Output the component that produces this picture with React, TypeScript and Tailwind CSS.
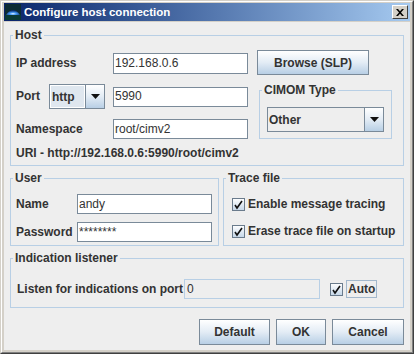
import type { ReactNode } from "react";

const label = "text-[12px] font-bold text-[#333333] leading-[15px] whitespace-nowrap";
const btn =
  "flex items-center justify-center border border-[#7a8a99] bg-linear-to-b from-white via-[#e3ecf5] to-[#b8cfe5] text-[12px] font-bold text-[#333333]";

function Group({ title, className, children }: { title: string; className?: string; children: ReactNode }) {
  return (
    <fieldset className={`border border-[#b8cfe5] min-w-0 ${className ?? ""}`}>
      <legend className="ml-[2px] px-[2px] h-[15px] leading-[15px] text-[12px] font-bold text-[#333333]">
        {title}
      </legend>
      {children}
    </fieldset>
  );
}

function Field({ value, className }: { value: string; className?: string }) {
  return (
    <div
      className={`flex items-center border border-[#7a8a99] bg-white pl-[1px] text-[12px] text-[#333333] leading-[15px] ${className ?? ""}`}
    >
      {value}
    </div>
  );
}

function Arrow() {
  return (
    <svg width="9" height="5" viewBox="0 0 9 5">
      <path d="M0 0h9L4.5 5z" fill="#111" />
    </svg>
  );
}

function Combo({ value, className, flat }: { value: string; className?: string; flat?: boolean }) {
  return (
    <div className={`flex border border-[#7a8a99] ${className ?? ""}`}>
      <div
        className={`flex-1 flex items-center pl-[1px] text-[12px] font-bold text-[#333333] ${
          flat ? "bg-[#eeeeee]" : "bg-[#dfe7ef] border border-white"
        }`}
      >
        {value}
      </div>
      <div className="w-[19px] flex items-center justify-center border-l border-[#7a8a99] bg-linear-to-b from-white via-[#e3ecf5] to-[#b8cfe5]">
        <Arrow />
      </div>
    </div>
  );
}

function Check() {
  return (
    <svg width="13" height="13" viewBox="0 0 13 13" className="shrink-0">
      <defs>
        <linearGradient id="cb" x1="0" y1="0" x2="0" y2="1">
          <stop offset="0" stopColor="#ffffff" />
          <stop offset="1" stopColor="#c4d6e8" />
        </linearGradient>
      </defs>
      <rect x="0.5" y="0.5" width="12" height="12" fill="url(#cb)" stroke="#6a7b8c" />
      <path d="M3 7l2 3L10 3" fill="none" stroke="#111" strokeWidth="1.6" />
    </svg>
  );
}

function AppIcon() {
  return (
    <svg width="16" height="16" viewBox="0 0 16 16">
      <defs>
        <radialGradient id="dome" cx="0.5" cy="0.75" r="0.6">
          <stop offset="0" stopColor="#e8f4ff" />
          <stop offset="0.35" stopColor="#4aa0ff" />
          <stop offset="1" stopColor="#0a3070" />
        </radialGradient>
      </defs>
      <rect width="16" height="16" fill="#0d2b33" />
      <path d="M1 11 Q8 1 15 11 Z" fill="url(#dome)" />
      <rect y="11" width="16" height="5" fill="#0a3a36" />
    </svg>
  );
}

export default function App() {
  return (
    <div className="w-[414px] h-[354px] font-['Liberation_Sans',Arial,sans-serif] border border-t-[#d4d0c8] border-l-[#d4d0c8] border-r-[#404040] border-b-[#404040]">
      <div className="h-full flex flex-col border border-t-white border-l-white border-r-[#808080] border-b-[#808080] bg-[#d4d0c8] px-[2px] pb-[2px] pt-[1px]">
        {/* title bar */}
        <div className="h-[18px] flex items-center bg-linear-to-r from-[#0a246a] to-[#a6caf0]">
          <div className="ml-[1px]">
            <AppIcon />
          </div>
          <span className="ml-[3px] text-[11.5px] font-bold text-white leading-[14px]">Configure host connection</span>
          <div className="ml-auto mr-[2px] w-[16px] h-[14px] border border-t-white border-l-white border-r-[#404040] border-b-[#404040] bg-[#d4d0c8] flex items-center justify-center">
            <svg width="8" height="7" viewBox="0 0 8 7">
              <path d="M0 0h2l2 2.3L6 0h2L5 3.5 8 7H6L4 4.7 2 7H0l3-3.5z" fill="#000" />
            </svg>
          </div>
        </div>

        {/* dialog content */}
        <div className="flex-1 mt-[1px] bg-[#eeeeee] flex flex-col">
          <Group title="Host" className="mx-[6px] mt-[6px] h-[138px]">
            <div className="flex pl-[5px] pt-[8px]">
              <div className="w-[232px] flex flex-col">
                <div className="flex items-center h-[25px]">
                  <span className={`${label} w-[97px]`}>IP address</span>
                  <Field value="192.168.0.6" className="w-[135px] h-[21px]" />
                </div>
                <div className="flex items-center h-[25px] mt-[8px]">
                  <span className={`${label} w-[33px]`}>Port</span>
                  <Combo value="http" className="w-[56px] h-[25px]" />
                  <Field value="5990" className="ml-[8px] w-[135px] h-[20px]" />
                </div>
                <div className="flex items-center h-[20px] mt-[10px]">
                  <span className={`${label} w-[97px]`}>Namespace</span>
                  <Field value="root/cimv2" className="w-[135px] h-[20px]" />
                </div>
                <div className={`${label} mt-[7px]`}>URI - http://192.168.0.6:5990/root/cimv2</div>
              </div>
              <div className="ml-[9px] flex flex-col -mt-[1px]">
                <div className={`${btn} w-[112px] h-[25px]`}>Browse (SLP)</div>
                <Group title="CIMOM Type" className="ml-[2px] mt-[8px] w-[133px] h-[56px]">
                  <div className="pl-[7px] pt-[9px]">
                    <Combo value="Other" flat className="w-[117px] h-[25px]" />
                  </div>
                </Group>
              </div>
            </div>
          </Group>

          <div className="flex mx-[6px] mt-[5px] gap-[4px]">
            <Group title="User" className="w-[209px] h-[75px]">
              <div className="pl-[5px] pt-[8px] flex flex-col gap-[8px]">
                <div className="flex items-center h-[20px]">
                  <span className={`${label} w-[61px]`}>Name</span>
                  <Field value="andy" className="w-[135px] h-[20px]" />
                </div>
                <div className="flex items-center h-[20px]">
                  <span className={`${label} w-[61px]`}>Password</span>
                  <Field value="********" className="w-[135px] h-[20px]" />
                </div>
              </div>
            </Group>
            <Group title="Trace file" className="flex-1 h-[75px]">
              <div className="pl-[8px] pt-[7px] flex flex-col gap-[5px]">
                <div className="flex items-center h-[22px] gap-[3px]">
                  <Check />
                  <span className={label}>Enable message tracing</span>
                </div>
                <div className="flex items-center h-[22px] gap-[3px]">
                  <Check />
                  <span className={label}>Erase trace file on startup</span>
                </div>
              </div>
            </Group>
          </div>

          <Group title="Indication listener" className="mx-[6px] mt-[5px] h-[57px]">
            <div className="flex items-center pl-[6px] pt-[13px]">
              <span className={`${label} w-[167px]`}>Listen for indications on port</span>
              <div className="w-[136px] h-[20px] flex items-center border border-[#b8cfe5] pl-[2px] text-[12px] text-[#333333]">
                0
              </div>
              <div className="ml-[10px]">
                <Check />
              </div>
              <span className={`${label} ml-[3px] border border-[#a3b8cc] px-[1px] h-[18px] flex items-center`}>Auto</span>
            </div>
          </Group>

          <div className="flex justify-end gap-[6px] mt-[11px] mr-[6px]">
            <div className={`${btn} w-[71px] h-[26px]`}>Default</div>
            <div className={`${btn} w-[50px] h-[26px]`}>OK</div>
            <div className={`${btn} w-[72px] h-[26px]`}>Cancel</div>
          </div>
        </div>
      </div>
    </div>
  );
}
